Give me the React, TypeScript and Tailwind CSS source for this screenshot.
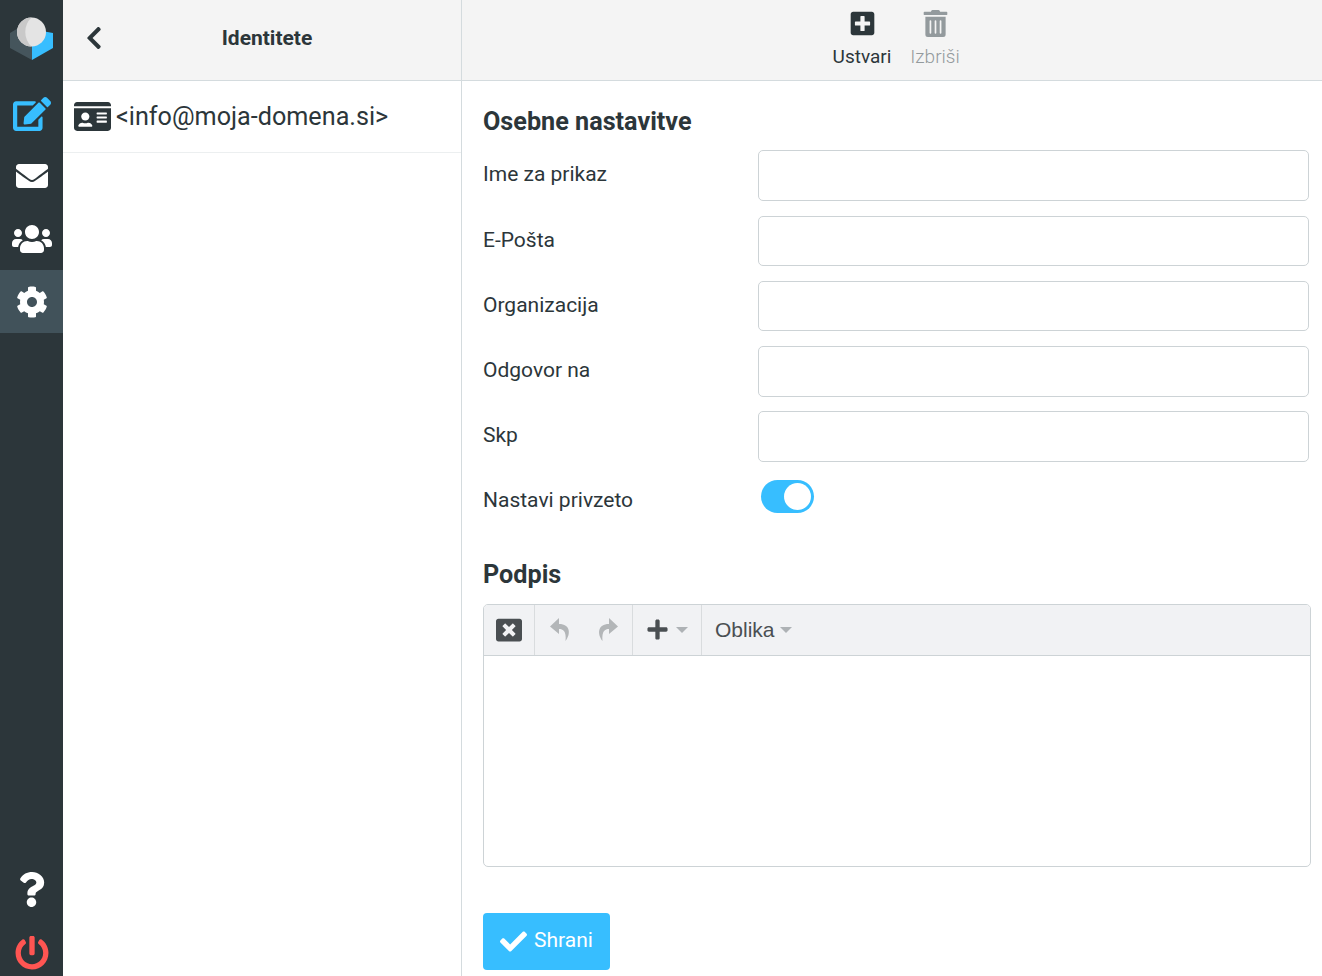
import { FaEdit, FaEnvelope, FaUsers, FaCog, FaQuestion, FaPowerOff, FaIdCard, FaChevronLeft, FaPlusSquare, FaTrashAlt, FaWindowClose, FaPlus, FaCheck } from "react-icons/fa";

const fields = ["Ime za prikaz", "E-Pošta", "Organizacija", "Odgovor na", "Skp"];

function Logo() {
  return (
    <svg width="44" height="44" viewBox="0 0 44 44">
      <path d="M0 16 L10 10 L22 14 L22 43 L0 31Z" fill="#45555c" />
      <path d="M22 43 L22 28 L32 14 L43 16 L43 31Z" fill="#37beff" />
      <circle cx="21.5" cy="15" r="14.5" fill="#e4e4e4" />
      <path d="M21.5 0.5 A14.5 14.5 0 0 0 21.5 29.5 A20 20 0 0 1 21.5 0.5Z" fill="#c9c9c9" />
    </svg>
  );
}

function Arrow({ flip }: { flip?: boolean }) {
  return (
    <svg width="21" height="23" viewBox="0 0 21 23" className={flip ? "-scale-x-100" : ""}>
      <path d="M9 0 L0 8.5 L9 16 L9 11 C13 11 16.5 13 15.5 23 C21 16 20.5 6 9 6Z" fill="#b3b6b8" />
    </svg>
  );
}

function Caret() {
  return <span className="w-0 h-0 border-x-[6px] border-x-transparent border-t-[6px] border-t-[#aeb2b5]" />;
}

export default function App() {
  return (
    <div className="flex h-screen w-full overflow-hidden bg-white text-[#2c363a] font-['Roboto',sans-serif]">
      {/* Menu */}
      <nav className="w-[63px] shrink-0 bg-[#2c363a] flex flex-col text-white">
        <div className="h-[81px] flex items-start justify-center pt-[17px] pl-[1px]"><Logo /></div>
        <div className="h-[63px] flex items-center justify-center text-[#37beff] text-[38px] pt-[2px]"><FaEdit /></div>
        <div className="h-[63px] flex items-center justify-center text-[32px]"><FaEnvelope /></div>
        <div className="h-[63px] flex items-center justify-center text-[40px]"><FaUsers /></div>
        <div className="h-[63px] flex items-center justify-center text-[32px] bg-[#41525a]"><FaCog /></div>
        <div className="flex-1" />
        <div className="h-[63px] flex items-center justify-center text-[35px]"><FaQuestion /></div>
        <div className="h-[63px] -mb-[8px] shrink-0 flex items-center justify-center text-[34px] text-[#ff5552]"><FaPowerOff /></div>
      </nav>

      {/* List */}
      <section className="w-[399px] shrink-0 border-r border-[#d4dbde] flex flex-col">
        <header className="h-[81px] shrink-0 bg-[#f4f4f4] border-b border-[#d4dbde] flex items-center relative">
          <FaChevronLeft className="ml-[18px] mb-[5px] text-[26px]" />
          <h1 className="absolute left-0 right-0 text-center text-[21px] font-bold pl-[10px] pb-[2px]">Identitete</h1>
        </header>
        <div className="h-[72px] border-b border-[#eceff0] flex items-center pl-[11px] text-[25.2px]">
          <FaIdCard className="text-[37px] mr-[5px]" />
          <span>&lt;info@moja-domena.si&gt;</span>
        </div>
      </section>

      {/* Content */}
      <main className="flex-1 min-w-0 flex flex-col">
        <header className="h-[81px] shrink-0 bg-[#f4f4f4] border-b border-[#d4dbde] flex justify-center pl-[13px]">
          <div className="w-[74px] flex flex-col items-center pt-[10px]">
            <FaPlusSquare className="text-[27px]" />
            <span className="text-[19px] leading-[22px] mt-[9px]">Ustvari</span>
          </div>
          <div className="w-[74px] -ml-[1px] flex flex-col items-center pt-[10px] text-[#939a9d]">
            <FaTrashAlt className="text-[27px]" />
            <span className="text-[19px] leading-[22px] mt-[9px] font-light">Izbriši</span>
          </div>
        </header>

        <div className="flex-1 pl-[21px] pr-[11px]">
          <h2 className="text-[25.2px] leading-[28px] font-bold mt-[27px] mb-[14.4px]">Osebne nastavitve</h2>
          <div className="flex flex-col gap-[14.5px] pr-[2px]">
            {fields.map((f) => (
              <div key={f} className="flex">
                <label className="w-[275px] text-[21px] leading-[48px] shrink-0">{f}</label>
                <input className="flex-1 h-[50.7px] border border-[#cdd3d6] rounded-[5px] bg-white" />
              </div>
            ))}
            <div className="flex h-[40px]">
              <label className="w-[275px] text-[21px] leading-[48px] shrink-0">Nastavi privzeto</label>
              <div className="ml-[3px] mt-[4px] w-[53px] h-[33px] rounded-full bg-[#37beff] flex items-center justify-end pr-[3px]">
                <span className="w-[27px] h-[27px] rounded-full bg-white" />
              </div>
            </div>
          </div>

          <h2 className="text-[25.2px] leading-[30px] font-bold mt-[44px] mb-[13.5px]">Podpis</h2>
          <div className="h-[263px] border border-[#cdd3d6] rounded-[5px] overflow-hidden">
            <div className="h-[51px] bg-[#f1f2f4] border-b border-[#cdd3d6] flex text-[#4a4f52]">
              <div className="w-[51px] border-r border-[#d9dcde] flex items-center justify-center text-[26px]"><FaWindowClose /></div>
              <div className="w-[98px] border-r border-[#d9dcde] flex items-center justify-center gap-[26px]">
                <Arrow />
                <Arrow flip />
              </div>
              <div className="w-[69px] border-r border-[#d9dcde] flex items-center justify-center gap-[7px] text-[23px]">
                <FaPlus />
                <Caret />
              </div>
              <div className="flex items-center pl-[13px] gap-[5px] text-[21px] font-['Liberation_Sans',sans-serif]">
                Oblika
                <Caret />
              </div>
            </div>
          </div>

          <button className="mt-[46px] w-[127px] h-[57px] bg-[#37beff] rounded-[4px] text-white text-[21px] flex items-center justify-center gap-[7px]">
            <FaCheck className="text-[27px]" />
            <span className="mb-[2px]">Shrani</span>
          </button>
        </div>
      </main>
    </div>
  );
}
